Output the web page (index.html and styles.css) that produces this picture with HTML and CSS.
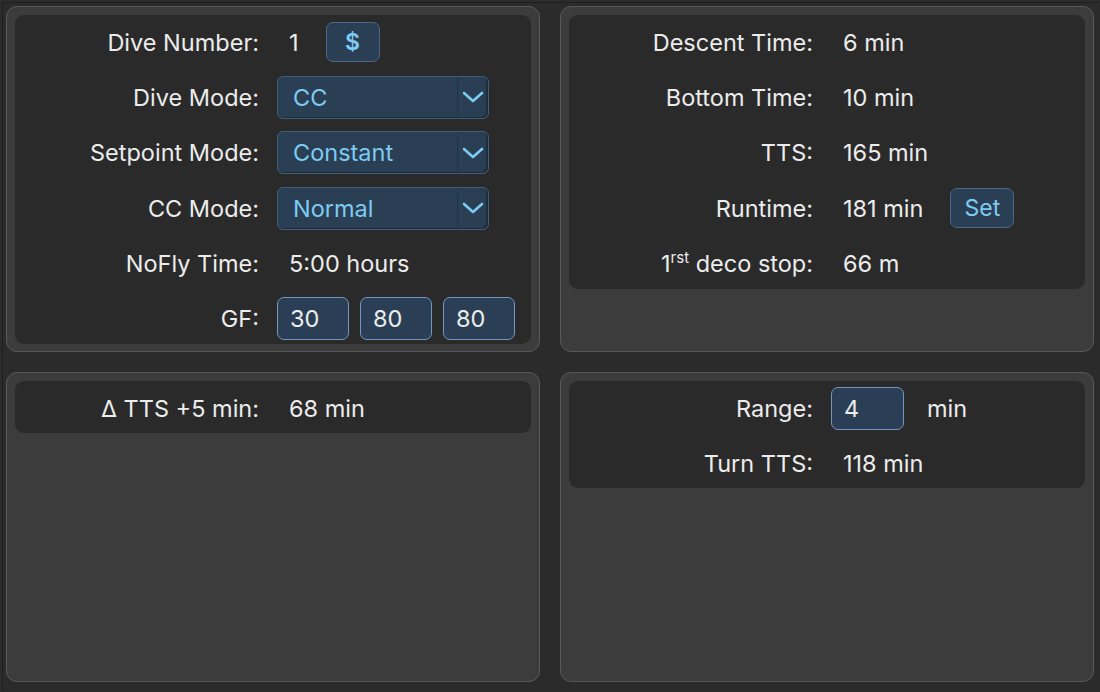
FILE: index.html
```html
<!DOCTYPE html>
<html lang="en">
<head>
    <meta charset="UTF-8">
    <meta name="viewport" content="width=device-width, initial-scale=1.0">
    <title>Dive Planner</title>
    <link rel="stylesheet" href="styles.css">
</head>
<body>
    <div class="window">
        <div class="panel">
            <div class="box">
                <div class="row">
                    <span class="label">Dive Number:</span>
                    <div class="value"><span class="text">1</span><button class="btn btn-dollar">$</button></div>
                </div>
                <div class="row">
                    <span class="label">Dive Mode:</span>
                    <div class="value">
                        <div class="select"><span>CC</span><span class="arrow"><svg width="22" height="14" viewBox="0 0 22 14"><path d="M2 3 L11 11 L20 3" fill="none" stroke="#7ecbf2" stroke-width="2.6" stroke-linecap="round" stroke-linejoin="round"/></svg></span></div>
                    </div>
                </div>
                <div class="row">
                    <span class="label">Setpoint Mode:</span>
                    <div class="value">
                        <div class="select"><span>Constant</span><span class="arrow"><svg width="22" height="14" viewBox="0 0 22 14"><path d="M2 3 L11 11 L20 3" fill="none" stroke="#7ecbf2" stroke-width="2.6" stroke-linecap="round" stroke-linejoin="round"/></svg></span></div>
                    </div>
                </div>
                <div class="row">
                    <span class="label">CC Mode:</span>
                    <div class="value">
                        <div class="select"><span>Normal</span><span class="arrow"><svg width="22" height="14" viewBox="0 0 22 14"><path d="M2 3 L11 11 L20 3" fill="none" stroke="#7ecbf2" stroke-width="2.6" stroke-linecap="round" stroke-linejoin="round"/></svg></span></div>
                    </div>
                </div>
                <div class="row">
                    <span class="label">NoFly Time:</span>
                    <div class="value"><span class="text">5:00 hours</span></div>
                </div>
                <div class="row">
                    <span class="label">GF:</span>
                    <div class="value gf">
                        <div class="field">30</div>
                        <div class="field">80</div>
                        <div class="field">80</div>
                    </div>
                </div>
            </div>
        </div>

        <div class="panel">
            <div class="box">
                <div class="row">
                    <span class="label">Descent Time:</span>
                    <div class="value"><span class="text">6 min</span></div>
                </div>
                <div class="row">
                    <span class="label">Bottom Time:</span>
                    <div class="value"><span class="text">10 min</span></div>
                </div>
                <div class="row">
                    <span class="label">TTS:</span>
                    <div class="value"><span class="text">165 min</span></div>
                </div>
                <div class="row">
                    <span class="label">Runtime:</span>
                    <div class="value"><span class="text">181 min</span><button class="btn btn-set">Set</button></div>
                </div>
                <div class="row">
                    <span class="label">1<sup>rst</sup> deco stop:</span>
                    <div class="value"><span class="text">66 m</span></div>
                </div>
            </div>
        </div>

        <div class="panel">
            <div class="box">
                <div class="row">
                    <span class="label">&Delta; TTS +5 min:</span>
                    <div class="value"><span class="text">68 min</span></div>
                </div>
            </div>
        </div>

        <div class="panel">
            <div class="box">
                <div class="row">
                    <span class="label">Range:</span>
                    <div class="value"><div class="field field-range">4</div><span class="unit">min</span></div>
                </div>
                <div class="row">
                    <span class="label">Turn TTS:</span>
                    <div class="value"><span class="text">118 min</span></div>
                </div>
            </div>
        </div>
    </div>
</body>
</html>
```
FILE: styles.css
```css
html, body { margin: 0; height: 100%; }
body { background-color: #2b2b2b; font-family: Inter, "Liberation Sans", sans-serif; font-size: 23.5px; color: #ececec; box-sizing: border-box; padding: 2px; }
.window { height: 100%; box-sizing: border-box; border-top: 1px solid #1f1f1f; border-left: 1px solid #1f1f1f; padding: 3px 4px 8px 3px; display: grid; grid-template-columns: 1fr 1fr; grid-template-rows: 346px 310px; gap: 20px; }
.panel { background-color: #3c3c3c; border: 1px solid #585858; border-radius: 11px; padding: 8px; }
.box { background-color: #2a2a2a; border-radius: 9px; padding: 3px 0 1px; display: flex; flex-direction: column; gap: 7.4px; }
.row { height: 48px; display: grid; grid-template-columns: 244px 1fr; column-gap: 18px; align-items: center; }
.label { text-align: right; white-space: nowrap; }
.label sup { font-size: 15px; vertical-align: 9px; line-height: 0; }
.value { display: flex; align-items: center; }
.text { padding-left: 12px; }
.btn { font-family: inherit; font-size: 23px; color: #7ecbf2; background-color: #2a3f54; border: 1.5px solid #496887; border-radius: 7px; height: 40px; padding: 0; }
.btn-dollar { width: 54px; margin-left: 27px; font-weight: 600; }
.btn-set { width: 64px; margin-left: 27px; }
.select { width: 212px; height: 43px; box-sizing: border-box; display: flex; align-items: center; justify-content: space-between; background-color: #2a3f54; border: 1.5px solid #3f5c7a; border-radius: 6px; box-shadow: inset -2px -1px 0 #1e2d3c; color: #7ecbf2; padding-left: 15px; }
.arrow { height: 100%; width: 30px; display: flex; align-items: center; justify-content: center; border-left: 1.5px solid #22344a; }
.gf { gap: 11px; }
.field { width: 72px; height: 43px; box-sizing: border-box; background-color: #2a3f55; border: 1.5px solid #7696c0; border-radius: 7px; padding-left: 12px; display: flex; align-items: center; }
.field-range { width: 73px; }
.unit { margin-left: 23px; }
```
